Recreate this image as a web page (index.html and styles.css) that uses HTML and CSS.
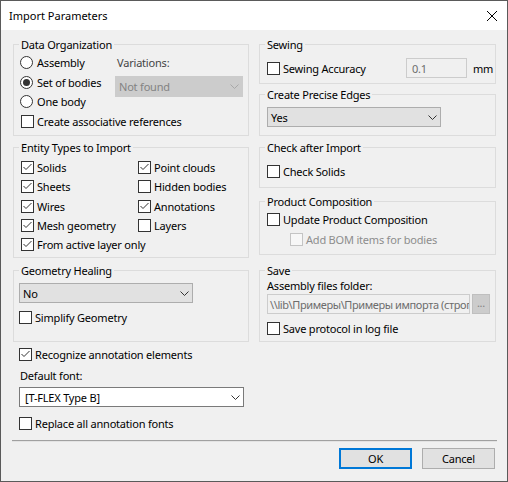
FILE: index.html
```html
<!DOCTYPE html>
<html>
<head>
<meta charset="utf-8">
<link rel="stylesheet" href="styles.css">
</head>
<body>
<div class="window">
  <div class="titlebar">
    <span class="title">Import Parameters</span>
    <svg class="close" width="10" height="10" viewBox="0 0 10 10"><path d="M0 0L10 10M10 0L0 10" stroke="#000" stroke-width="1" fill="none"/></svg>
  </div>
  <div class="content">
    <div class="grid">
      <!-- Row 1 left -->
      <div class="group g-data">
        <div class="legend">Data Organization</div>
        <div class="do-top">
          <div class="do-radios">
            <div class="row r195"><span class="radio"></span>Assembly</div>
            <div class="row r195"><span class="radio on"></span>Set of bodies</div>
            <div class="row r195"><span class="radio"></span>One body</div>
          </div>
          <div class="do-var">
            <div class="row r195 var-label">Variations:</div>
            <div class="combo combo-disabled combo-var"><span>Not found</span><svg class="chev" width="9" height="5" viewBox="0 0 9 5"><polyline points="0.5,0.5 4.5,4.5 8.5,0.5" fill="none" stroke="#a8a8a8"/></svg></div>
          </div>
        </div>
        <div class="row r195"><span class="cb"></span>Create associative references</div>
      </div>
      <!-- Row 1 right -->
      <div class="stack">
        <div class="group g-sewing">
          <div class="legend">Sewing</div>
          <div class="row sew-row">
            <span class="cb"></span><span class="sew-label">Sewing Accuracy</span>
            <div class="edit edit-disabled sew-input">0.1</div>
            <span class="mm">mm</span>
          </div>
        </div>
        <div class="group g-precise">
          <div class="legend">Create Precise Edges</div>
          <div class="combo combo-precise"><span>Yes</span><svg class="chev" width="9" height="5" viewBox="0 0 9 5"><polyline points="0.5,0.5 4.5,4.5 8.5,0.5" fill="none" stroke="#333"/></svg></div>
        </div>
      </div>
      <!-- Row 2 left -->
      <div class="group g-entity r2">
        <div class="legend">Entity Types to Import</div>
        <div class="entity-grid">
          <div class="row"><span class="cb"><svg width="11" height="11" viewBox="0 0 11 11"><polyline points="1.5,5 4,7.5 9.5,2" fill="none" stroke="#333"/></svg></span>Solids</div>
          <div class="row"><span class="cb"><svg width="11" height="11" viewBox="0 0 11 11"><polyline points="1.5,5 4,7.5 9.5,2" fill="none" stroke="#333"/></svg></span>Point clouds</div>
          <div class="row"><span class="cb"><svg width="11" height="11" viewBox="0 0 11 11"><polyline points="1.5,5 4,7.5 9.5,2" fill="none" stroke="#333"/></svg></span>Sheets</div>
          <div class="row"><span class="cb"></span>Hidden bodies</div>
          <div class="row"><span class="cb"><svg width="11" height="11" viewBox="0 0 11 11"><polyline points="1.5,5 4,7.5 9.5,2" fill="none" stroke="#333"/></svg></span>Wires</div>
          <div class="row"><span class="cb"><svg width="11" height="11" viewBox="0 0 11 11"><polyline points="1.5,5 4,7.5 9.5,2" fill="none" stroke="#333"/></svg></span>Annotations</div>
          <div class="row"><span class="cb"><svg width="11" height="11" viewBox="0 0 11 11"><polyline points="1.5,5 4,7.5 9.5,2" fill="none" stroke="#333"/></svg></span>Mesh geometry</div>
          <div class="row"><span class="cb"></span>Layers</div>
          <div class="row span2"><span class="cb"><svg width="11" height="11" viewBox="0 0 11 11"><polyline points="1.5,5 4,7.5 9.5,2" fill="none" stroke="#333"/></svg></span>From active layer only</div>
        </div>
      </div>
      <!-- Row 2 right -->
      <div class="stack r2">
        <div class="group g-check">
          <div class="legend">Check after Import</div>
          <div class="row"><span class="cb"></span>Check Solids</div>
        </div>
        <div class="group g-product">
          <div class="legend">Product Composition</div>
          <div class="row"><span class="cb"></span>Update Product Composition</div>
          <div class="row indent disabled-text"><span class="cb cb-disabled"></span>Add BOM items for bodies</div>
        </div>
      </div>
      <!-- Row 3 left -->
      <div class="left3 r3">
        <div class="group g-heal">
          <div class="legend">Geometry Healing</div>
          <div class="combo combo-heal"><span>No</span><svg class="chev" width="9" height="5" viewBox="0 0 9 5"><polyline points="0.5,0.5 4.5,4.5 8.5,0.5" fill="none" stroke="#333"/></svg></div>
          <div class="row"><span class="cb"></span>Simplify Geometry</div>
        </div>
        <div class="bottom-left">
          <div class="row recog"><span class="cb"><svg width="11" height="11" viewBox="0 0 11 11"><polyline points="1.5,5 4,7.5 9.5,2" fill="none" stroke="#333"/></svg></span>Recognize annotation elements</div>
          <div class="font-label">Default font:</div>
          <div class="combo combo-font"><span>[T-FLEX Type B]</span><svg class="chev" width="9" height="5" viewBox="0 0 9 5"><polyline points="0.5,0.5 4.5,4.5 8.5,0.5" fill="none" stroke="#333"/></svg></div>
          <div class="row replace"><span class="cb"></span>Replace all annotation fonts</div>
        </div>
      </div>
      <!-- Row 3 right -->
      <div class="group g-save r3">
        <div class="legend">Save</div>
        <div class="save-label">Assembly files folder:</div>
        <div class="path-row">
          <div class="edit edit-disabled path-input"><span class="path-text">\\lib\Примеры\Примеры импорта (строг</span></div>
          <div class="browse">...</div>
        </div>
        <div class="row save-row"><span class="cb"></span>Save protocol in log file</div>
      </div>
    </div>
    <div class="sep"></div>
    <div class="buttons">
      <div class="btn btn-default">OK</div>
      <div class="btn">Cancel</div>
    </div>
  </div>
</div>
</body>
</html>
```

FILE: styles.css
```css
* { box-sizing: border-box; }
html, body { margin: 0; padding: 0; background: #f0f0f0; }
body {
  font-family: "Noto Sans", "Open Sans", sans-serif;
  font-size: 11px;
  line-height: 15px;
  letter-spacing: -0.2px;
  color: #000;
}
.window {
  width: 508px;
  height: 482px;
  border: 1px solid #5a5a5a;
  background: #f0f0f0;
}
.titlebar {
  height: 29px;
  background: #fff;
  display: flex;
  align-items: center;
  padding: 0 10px 0 8px;
}
.title { flex: 1; letter-spacing: 0; }
.close { display: block; }

.content { padding: 14px 11px 0 12px; }

.grid {
  display: grid;
  grid-template-columns: 236px 237px;
  column-gap: 10px;
  align-items: start;
}
.r2 { margin-top: 11px; }
.r3 { margin-top: 12px; }

.group {
  border: 1px solid #dcdcdc;
  padding: 0 0 0 7px;
}
.legend {
  width: fit-content;
  margin: -8px 0 0 -2px;
  padding: 0 2px;
  background: #f0f0f0;
  line-height: 15px;
}

.row {
  display: flex;
  align-items: center;
  height: 20px;
  white-space: nowrap;
}
.r195 { height: 19.5px; }

.cb {
  flex: none;
  width: 13px;
  height: 13px;
  border: 1px solid #333;
  background: #fff;
  margin-right: 3px;
}
.cb svg { display: block; }
.cb-disabled { border-color: #c4c4c4; background: #f7f7f7; }
.disabled-text { color: #8d8d8d; }

.radio {
  flex: none;
  width: 13px;
  height: 13px;
  border: 1px solid #333;
  border-radius: 50%;
  background: #fff;
  margin: 0 4px 0 -1px;
  display: flex;
  align-items: center;
  justify-content: center;
}
.radio.on::after {
  content: "";
  width: 7px;
  height: 7px;
  border-radius: 50%;
  background: #333;
}

.combo {
  display: flex;
  align-items: center;
  height: 20px;
  border: 1px solid #adadad;
  background: #e1e1e1;
  padding: 0 3px 0 3px;
  white-space: nowrap;
}
.combo .chev { margin-left: auto; display: block; flex: none; }
.combo-disabled { background: #cccccc; border-color: #cccccc; color: #838383; }

.edit {
  height: 20px;
  border: 1px solid #cccccc;
  background: #f0f0f0;
  display: flex;
  align-items: center;
  white-space: nowrap;
  overflow: hidden;
}
.edit-disabled { color: #6d6d6d; }

/* Data organization */
.g-data { padding-bottom: 4px; }
.do-top { display: flex; margin-top: 1px; }
.do-radios { width: 94px; }
.do-var { width: 128px; }
.var-label { padding-left: 2px; color: #444; }
.combo-var { margin-top: 3px; height: 21px; }

/* Sewing */
.g-sewing { padding-bottom: 5px; }
.sew-row { margin-top: 6px; }
.sew-label { flex: 1; }
.sew-input { width: 61px; padding-left: 5px; }
.mm { width: 22px; margin-left: 6px; }

.g-precise { margin-top: 10px; padding-bottom: 8px; }
.combo-precise { margin-top: 5px; width: 174px; }

/* Entity */
.g-entity { padding-bottom: 2.75px; }
.entity-grid {
  margin-top: 3px;
  display: grid;
  grid-template-columns: 117px 1fr;
  grid-auto-rows: 19.25px;
}
.entity-grid .row { height: 19.25px; }
.span2 { grid-column: span 2; }

.g-check { padding-bottom: 6px; }
.g-check .row { margin-top: 6px; }
.g-product { margin-top: 13px; padding-bottom: 5px; }
.g-product .row:first-of-type { margin-top: 3px; }
.indent { padding-left: 23px; }

/* Geometry healing */
.g-heal { padding-bottom: 14px; padding-left: 5px; }
.g-heal .legend { margin-left: 0; }
.combo-heal { margin-top: 5px; width: 174px; }
.g-heal .row { margin-top: 4px; }

.bottom-left { padding-left: 6px; }
.recog { margin-top: 2px; }
.font-label { margin-top: 4px; padding-left: 1px; }
.combo-font {
  margin-top: 4px;
  width: 225px;
  background: #fff;
  border-color: #7a7a7a;
  padding-left: 5px;
}
.replace { margin-top: 6px; }

/* Save */
.g-save { padding-bottom: 3px; }
.save-label { line-height: 15px; }
.path-row { display: flex; margin-top: 1px; }
.path-input { width: 203px; padding-left: 2px; }
.path-text { letter-spacing: -0.4px; }
.browse {
  width: 18px;
  height: 20px;
  margin-left: 2px;
  background: #cccccc;
  border: 1px solid #bfbfbf;
  color: #838383;
  text-align: center;
  line-height: 16px;
}
.save-row { margin-top: 4px; }

.sep {
  margin: 7px 0 0 -1px;
  width: 485px;
  height: 2px;
  border-top: 1px solid #a0a0a0;
  border-bottom: 1px solid #e3e3e3;
}
.buttons {
  display: flex;
  justify-content: flex-end;
  gap: 10px;
  margin-top: 6px;
  padding-right: 1px;
}
.btn {
  width: 73px;
  height: 21px;
  border: 1px solid #adadad;
  background: #e1e1e1;
  display: flex;
  align-items: center;
  justify-content: center;
}
.btn-default { border: 2px solid #0078d7; }
```
